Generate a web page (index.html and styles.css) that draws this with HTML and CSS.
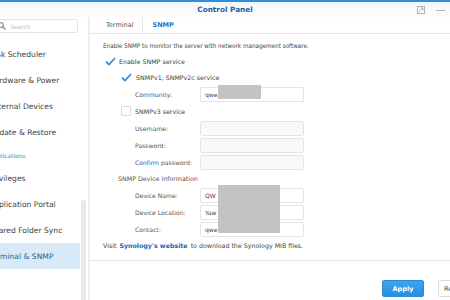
FILE: index.html
```html
<!DOCTYPE html>
<html>
<head>
<meta charset="utf-8">
<link rel="stylesheet" href="styles.css">
</head>
<body>
<div class="window">
  <div class="topline"></div>
  <div class="titlebar">
    <div></div>
    <div class="title">Control Panel</div>
    <div class="controls">
      <svg width="8" height="8" viewBox="0 0 8 8"><rect x="0.5" y="0.5" width="7" height="7" fill="none" stroke="#b0b5bb"/><path d="M2 6 L6 2 M3.5 2 H6 V4.5" stroke="#b0b5bb" fill="none"/></svg>
      <svg width="9" height="8" viewBox="0 0 9 8"><path d="M0 4.5 H9" stroke="#b0b5bb" stroke-width="1"/></svg>
    </div>
  </div>
  <div class="body">
    <aside class="sidebar">
      <div class="search">
        <svg width="8" height="8" viewBox="0 0 8 8" class="mag"><circle cx="3" cy="3" r="2.3" fill="none" stroke="#888" stroke-width="1.1"/><path d="M4.7 4.7 L7.5 7.5" stroke="#888" stroke-width="1.3"/></svg>
        <span class="ph">Search</span>
      </div>
      <ul class="nav">
        <li>Task Scheduler</li>
        <li>Hardware &amp; Power</li>
        <li>External Devices</li>
        <li>Update &amp; Restore</li>
        <li class="section">Applications</li>
        <li>Privileges</li>
        <li>Application Portal</li>
        <li>Shared Folder Sync</li>
        <li class="active">Terminal &amp; SNMP</li>
        <li>DS</li>
      </ul>
      <div class="scrollbar"></div>
    </aside>
    <main class="main">
      <div class="tabs">
        <span class="tab">Terminal</span>
        <span class="tab selected">SNMP</span>
      </div>
      <div class="form">
        <div class="row desc">Enable SNMP to monitor the server with network management software.</div>
        <div class="row lvl1">
          <svg class="check" width="11" height="9" viewBox="0 0 11 9"><path d="M1 4.5 L4 7.5 L10 1" fill="none" stroke="#2a86d6" stroke-width="1.6"/></svg>
          <span>Enable SNMP service</span>
        </div>
        <div class="row lvl2">
          <svg class="check" width="11" height="9" viewBox="0 0 11 9"><path d="M1 4.5 L4 7.5 L10 1" fill="none" stroke="#2a86d6" stroke-width="1.6"/></svg>
          <span>SNMPv1, SNMPv2c service</span>
        </div>
        <div class="row field">
          <span class="label">Community:</span>
          <span class="input">qwe</span>
        </div>
        <div class="row lvl2">
          <span class="box"></span>
          <span>SNMPv3 service</span>
        </div>
        <div class="row field">
          <span class="label">Username:</span>
          <span class="input empty"></span>
        </div>
        <div class="row field">
          <span class="label">Password:</span>
          <span class="input empty"></span>
        </div>
        <div class="row field">
          <span class="label">Confirm password:</span>
          <span class="input empty"></span>
        </div>
        <div class="row lvl1b">SNMP Device information</div>
        <div class="row field">
          <span class="label">Device Name:</span>
          <span class="input">QW</span>
        </div>
        <div class="row field">
          <span class="label">Device Location:</span>
          <span class="input">Yaw</span>
        </div>
        <div class="row field">
          <span class="label">Contact:</span>
          <span class="input">qwe</span>
        </div>
        <div class="row visit">Visit <a>Synology's website</a> to download the Synology MIB files.</div>
        <div class="redact r1"></div>
        <div class="redact r2"></div>
      </div>
      <div class="footer">
        <button class="btn apply">Apply</button>
        <button class="btn reset">Reset</button>
      </div>
    </main>
  </div>
</div>
</body>
</html>
```
FILE: styles.css
```css
* { box-sizing: border-box; }
html, body { margin: 0; padding: 0; }
body {
  width: 450px;
  height: 300px;
  overflow: hidden;
  background: #fff;
  font-family: "DejaVu Sans", Verdana, sans-serif;
  color: #404040;
}
.window { width: 450px; height: 300px; display: flex; flex-direction: column; }
.topline { height: 2px; background: #2f8fdc; flex: none; }
.titlebar {
  height: 15px;
  flex: none;
  display: grid;
  grid-template-columns: 1fr auto 1fr;
  align-items: center;
  background: linear-gradient(#f4f8fb, #fbfcfd);
}
.title { font-size: 7.3px; font-weight: bold; color: #1e5fa8; }
.controls { display: flex; justify-content: flex-end; align-items: center; gap: 11px; padding-right: 5px; }
.body { flex: 1; display: flex; min-height: 0; }
.sidebar {
  width: 90px;
  flex: none;
  border-right: 2px solid #eceef0;
  position: relative;
  overflow: hidden;
}
.search {
  margin: 2px 10px 0 -20px;
  height: 14px;
  border: 1px solid #dfe3e7;
  border-radius: 2px;
  display: flex;
  align-items: center;
  padding-left: 17px;
  gap: 4px;
}
.mag { flex: none; }
.ph { font-size: 6px; color: #b8bcc0; }
.nav { list-style: none; margin: 8px 0 0 -11px; padding: 0; width: 91px; }
.nav li {
  height: 26px;
  display: flex;
  align-items: center;
  padding-left: 0;
  font-size: 7.6px;
  color: #3a3f45;
  white-space: nowrap;
}
.nav li.section { height: 20px; font-size: 6px; color: #3f8fa6; }
.nav li.active { background: #d8eaf8; color: #2a5f90; }
.scrollbar {
  position: absolute;
  left: 81px;
  top: 183px;
  width: 5px;
  height: 130px;
  background: #e6e8ea;
  border-radius: 2px;
}
.main { flex: 1; display: flex; flex-direction: column; min-width: 0; }
.tabs {
  height: 17px;
  flex: none;
  display: flex;
  align-items: center;
  padding-left: 16px;
  gap: 0;
  border-bottom: 1px solid #e4e7ea;
}
.tab { font-size: 6.5px; color: #555; padding: 0 9px 0 0; height: 17px; display: flex; align-items: center; }
.tab:first-child { border-right: 1px solid #e6e8ea; margin-right: 9px; }
.tab.selected { color: #1f72c2; font-weight: bold; }
.form {
  position: relative;
  padding: 3px 0 0 13px;
  flex: none;
}
.row { display: flex; align-items: center; height: 16.5px; font-size: 6.3px; white-space: nowrap; }
.desc { height: 16px; color: #444; font-family: "DejaVu Sans Condensed", "DejaVu Sans", sans-serif; }
.lvl1 { padding-left: 2px; gap: 3px; }
.lvl2 { padding-left: 18px; gap: 4px; }
.lvl1b { padding-left: 15px; color: #555; }
.field { padding-left: 32px; height: 17px; }
.label { width: 65px; color: #555; font-size: 6.1px; }
.input {
  width: 104px;
  height: 15px;
  border: 1px solid #e2e4e6;
  border-radius: 2px;
  display: flex;
  align-items: center;
  padding-left: 4px;
  color: #444;
  background: #fff;
  font-size: 6px;
}
.input.empty { background: linear-gradient(#f7f8f9, #fbfbfc); }
.box { width: 10px; height: 10px; border: 1px solid #d8dbde; border-radius: 1px; background: #fff; flex: none; }
.check { flex: none; }
.visit { height: 15px; color: #444; }
.visit a { color: #1468b8; font-weight: bold; margin: 0 3px; }
.redact { position: absolute; background: #c3c3c3; }
.r1 { left: 128px; top: 51px; width: 43px; height: 14px; }
.r2 { left: 128px; top: 151px; width: 62px; height: 48px; }
.footer {
  margin-top: 7px;
  border-top: 1px solid #e3e5e7;
  flex: 1;
  display: flex;
  align-items: flex-end;
  gap: 14px;
  padding: 0 0 3px 292px;
}
.btn {
  height: 17px;
  font-family: inherit;
  font-size: 6.5px;
  border-radius: 2px;
  padding: 0;
  flex: none;
}
.apply {
  width: 42px;
  background: linear-gradient(#3aa5f0, #2690e0);
  border: 1px solid #2a8bd6;
  color: #fff;
  font-weight: bold;
}
.reset { width: 40px; background: #fff; border: 1px solid #d8dbde; color: #444; text-align: left; padding-left: 5px; }
```
